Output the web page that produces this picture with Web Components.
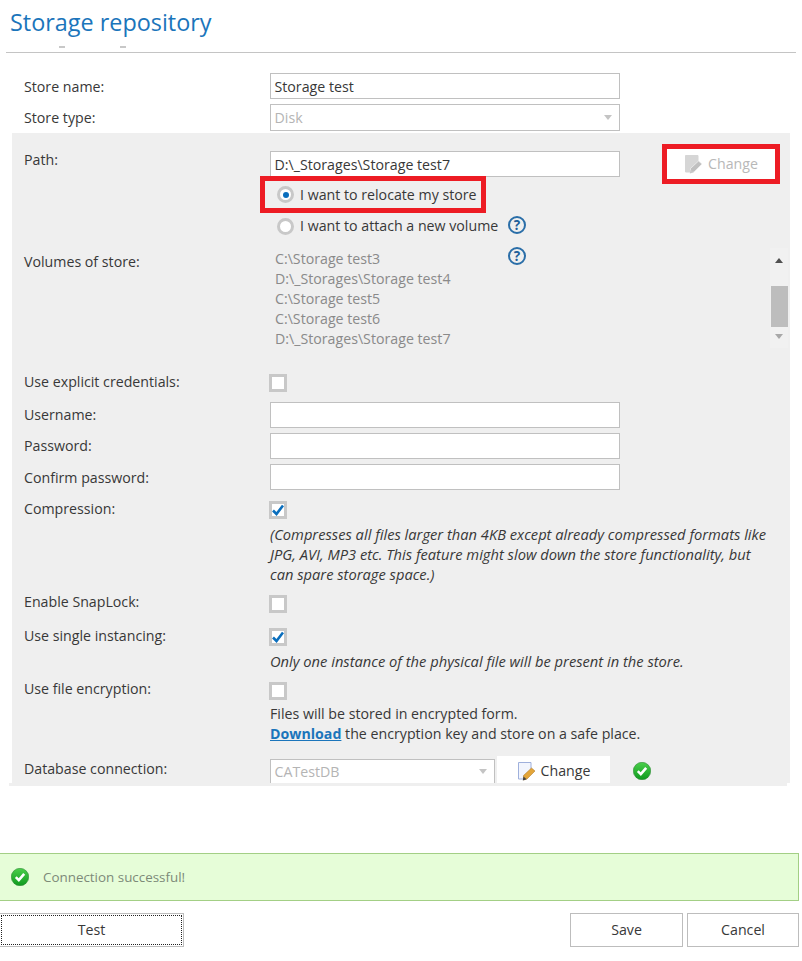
<!DOCTYPE html>
<html>
<head>
<meta charset="utf-8">
<title>Storage repository</title>
<style>
html,body{margin:0;padding:0;background:#fff;}
body{font:14.2px/20px "Open Sans",sans-serif;color:#383838;overflow:hidden;}
a{color:#1b75bb;font-weight:700;}
.note{margin-top:5px;font-style:italic;font-size:14.7px;}
</style>
</head>
<body>
<storage-dialog>
  <sr-row label="Store name:" style="margin-top:20px;--label-top:4px"><sr-field>Storage test</sr-field></sr-row>
  <sr-row label="Store type:" style="margin-top:5px;--label-top:4px"><sr-select disabled style="height:27px">Disk</sr-select></sr-row>

  <sr-panel slot="panel">
    <sr-row label="Path:" style="--label-top:-1px">
      <div style="display:flex;align-items:flex-start">
        <div style="width:350px">
          <sr-field>D:\_Storages\Storage test7</sr-field>
          <sr-radio checked marked>I want to relocate my store</sr-radio>
          <div style="display:flex"><sr-radio>I want to attach a new volume</sr-radio><sr-help style="margin-top:3px"></sr-help></div>
        </div>
        <sr-button icon disabled marked style="margin:-7px 0 0 42px;width:118px;height:40px">Change</sr-button>
      </div>
    </sr-row>
    <sr-row label="Volumes of store:" style="margin-top:10px;--label-top:3px">
      <div style="display:flex;align-items:flex-start">
        <sr-volumes>
          <div>C:\Storage test3</div>
          <div>D:\_Storages\Storage test4</div>
          <div>C:\Storage test5</div>
          <div>C:\Storage test6</div>
          <div>D:\_Storages\Storage test7</div>
        </sr-volumes>
        <sr-help style="margin-top:-2px"></sr-help>
        <sr-scrollbar style="margin:-1px 0 0 auto"></sr-scrollbar>
      </div>
    </sr-row>
    <sr-row label="Use explicit credentials:" style="margin-top:25px;--label-top:-2px"><sr-check></sr-check></sr-row>
    <sr-row label="Username:" style="margin-top:10px;--label-top:3px"><sr-field></sr-field></sr-row>
    <sr-row label="Password:" style="margin-top:5px;--label-top:3px"><sr-field></sr-field></sr-row>
    <sr-row label="Confirm password:" style="margin-top:5px;--label-top:4px"><sr-field></sr-field></sr-row>
    <sr-row label="Compression:" style="margin-top:11px;--label-top:-2px">
      <sr-check checked></sr-check>
      <div class="note" style="width:500px">(Compresses all files larger than 4KB except already compressed formats like JPG, AVI, MP3 etc. This feature might slow down the store functionality, but can spare storage space.)</div>
    </sr-row>
    <sr-row label="Enable SnapLock:" style="margin-top:11px;--label-top:-3px"><sr-check></sr-check></sr-row>
    <sr-row label="Use single instancing:" style="margin-top:15px;--label-top:-2px">
      <sr-check checked></sr-check>
      <div class="note">Only one instance of the physical file will be present in the store.</div>
    </sr-row>
    <sr-row label="Use file encryption:" style="margin-top:11px;--label-top:-3px">
      <sr-check></sr-check>
      <div style="margin-top:4px">Files will be stored in encrypted form.<br><a href="#">Download</a> the encryption key and store on a safe place.</div>
    </sr-row>
    <sr-row label="Database connection:" style="margin-top:12px;--label-top:3px">
      <div style="display:flex;align-items:flex-start">
        <sr-select disabled open-bottom style="width:225px;height:24px;margin-top:3px">CATestDB</sr-select>
        <sr-button icon style="margin-left:2px;width:113px;height:27px;padding-top:2px">Change</sr-button>
        <sr-ok style="margin:6px 0 0 23px"></sr-ok>
      </div>
    </sr-row>
  </sr-panel>

  <sr-message slot="footer">Connection successful!</sr-message>
  <div slot="footer" style="display:flex;margin:12px 3px 0 -1px">
    <sr-push focused style="width:185px">Test</sr-push>
    <sr-push style="width:113px;margin-left:auto">Save</sr-push>
    <sr-push style="width:112px;margin-left:4px">Cancel</sr-push>
  </div>
</storage-dialog>

<script>
// small helper, every component just clones its own template
function tpl(html) {
  const t = document.createElement("template");
  t.innerHTML = html;
  return t;
}

function define(name, html) {
  const t = tpl(html);
  customElements.define(name, class extends HTMLElement {
    constructor() {
      super();
      this.attachShadow({mode: "open"}).append(t.content.cloneNode(true));
    }
  });
}

const DOC_ICON = `
<svg width="20" height="20" viewBox="0 0 20 20">
  <path class="sheet" d="M1.5 1.5h12.5v10l-6 6.500h-6.500z"/>
  <path class="pencil" d="M6.500 14.500 14.500 7l3.500 3-8 8-3.500 1z"/>
  <path class="tip" d="M6.500 15.500 5.800 19.500l3.800-1.200z"/>
</svg>`;

define("storage-dialog", `
<style>
:host{display:block;width:802px;height:961px;overflow:hidden;}
h1{margin:0;padding:5px 0 0 10px;height:35px;font:400 23.4px/34px "Open Sans",sans-serif;color:#1b75bb;}
.clipped{display:flex;height:12px;padding-left:59px;box-sizing:border-box;}
.clipped i{display:block;width:6px;height:2px;margin-top:6px;background:#c8c8c8;}
.clipped i+i{margin-left:55px;}
.rule{margin-left:6px;width:790px;height:1px;background:#c4c4c4;}
</style>
<h1>Storage repository</h1>
<div class="clipped"><i></i><i></i></div>
<div class="rule"></div>
<slot></slot>
<slot name="panel"></slot>
<slot name="footer"></slot>
`);

define("sr-panel", `
<style>
:host{display:block;margin-top:2px;}
.body{margin-left:12px;width:778px;padding:18px 2px 0 12px;box-sizing:border-box;height:650px;overflow:hidden;background:#efefef;}
.strip{margin-left:9px;width:778px;height:3px;background:#efefef;}
</style>
<div class="body"><slot></slot></div>
<div class="strip"></div>
`);

const rowTemplate = tpl(`
<style>
:host{display:grid;grid-template-columns:246px 1fr;padding-left:24px;}
:host([slot]){padding-left:0;}
.label{margin-top:var(--label-top,0);line-height:20px;white-space:nowrap;}
</style>
<div class="label"></div>
<div><slot></slot></div>
`);

customElements.define("sr-row", class extends HTMLElement {
  constructor() {
    super();
    this.attachShadow({mode: "open"}).append(rowTemplate.content.cloneNode(true));
    this.shadowRoot.querySelector(".label").textContent = this.getAttribute("label");
  }
  connectedCallback() {
    // rows inside the grey panel already get their indent from it
    if (this.parentElement.localName === "sr-panel") this.style.paddingLeft = "0";
  }
});

define("sr-field", `
<style>
:host{display:block;box-sizing:border-box;width:350px;height:26px;padding:0 3.500px;border:1px solid #c0c0c0;background:#fff;line-height:25px;white-space:nowrap;overflow:hidden;}
</style>
<slot></slot>
`);

define("sr-select", `
<style>
:host{display:flex;align-items:center;box-sizing:border-box;width:350px;height:26px;padding:0 7px 0 3.500px;border:1px solid #c0c0c0;background:#fff;color:#b4b4b4;}
:host([open-bottom]){border-bottom:0;}
.text{flex:1;}
.arrow{width:0;height:0;border:4px solid transparent;border-top:5px solid #c4c4c4;border-bottom:0;}
</style>
<span class="text"><slot></slot></span>
<span class="arrow"></span>
`);

define("sr-radio", `
<style>
:host{display:flex;align-items:center;box-sizing:border-box;width:238px;height:26px;padding-left:7px;white-space:nowrap;}
:host([marked]){margin:-1px 0 0 -10px;width:226px;height:37px;padding-left:12px;border:5px solid #ed1c24;}
.dot{flex:none;box-sizing:border-box;width:17px;height:17px;margin-right:6px;border:3px solid #c8c8c8;border-radius:50%;background:#fff;display:grid;place-items:center;}
:host([checked]) .dot::after{content:"";width:6px;height:6px;border-radius:50%;background:#0a6ebd;}
</style>
<span class="dot"></span><slot></slot>
`);

define("sr-check", `
<style>
:host{display:block;box-sizing:border-box;width:18px;height:18px;margin-left:-1px;border:3px solid #c8c8c8;background:#fff;}
svg{display:none;}
:host([checked]) svg{display:block;}
</style>
<svg width="12" height="12" viewBox="0 0 12 12"><path d="M1 6.500 4.500 10 11 1.500" fill="none" stroke="#0a6ebd" stroke-width="2.600"/></svg>
`);

define("sr-help", `
<style>
:host{display:grid;place-items:center;flex:none;box-sizing:border-box;width:18px;height:18px;border:2px solid #2a6ea8;border-radius:50%;color:#1f5f9a;font:700 13.500px/14px "Open Sans",sans-serif;}
</style>
?
`);

define("sr-volumes", `
<style>
:host{display:block;box-sizing:border-box;width:238px;padding-left:5px;line-height:20px;color:#8a8a8a;white-space:nowrap;}
</style>
<slot></slot>
`);

define("sr-scrollbar", `
<style>
:host{display:flex;flex-direction:column;align-items:center;box-sizing:border-box;width:18px;height:100px;background:#f1f1f1;}
.up,.down{width:0;height:0;border:4px solid transparent;}
.up{margin-top:10px;border-top:0;border-bottom:5px solid #505050;}
.thumb{width:17px;height:41px;margin-top:23px;background:#bdbdbd;}
.down{margin-top:7px;border-bottom:0;border-top:5px solid #a8a8a8;}
</style>
<span class="up"></span><span class="thumb"></span><span class="down"></span>
`);

define("sr-button", `
<style>
:host{display:flex;align-items:center;justify-content:center;flex:none;box-sizing:border-box;background:#fff;white-space:nowrap;}
:host([marked]){border:5px solid #ed1c24;}
:host([disabled]){color:#b8b8b8;}
svg{margin-right:4px;flex:none;}
.sheet{fill:#f2f5fd;stroke:#9fb0dc;}
.pencil{fill:#e3a53a;stroke:#a8701c;stroke-width:.500;}
.tip{fill:#444;}
:host([disabled]) .sheet{fill:#d6d6d6;stroke:#d6d6d6;}
:host([disabled]) .pencil{fill:#c0c0c0;stroke:#efefef;stroke-width:.800;}
:host([disabled]) .tip{fill:#c8c8c8;}
</style>
${DOC_ICON}<slot></slot>
`);

define("sr-ok", `
<style>
:host{display:block;flex:none;width:18px;height:18px;}
svg{display:block;}
</style>
<svg width="18" height="18" viewBox="0 0 18 18">
  <defs><linearGradient id="g" x1="0" y1="0" x2="0" y2="1"><stop offset="0" stop-color="#4bcf4b"/><stop offset="1" stop-color="#0f9a1e"/></linearGradient></defs>
  <circle cx="9" cy="9" r="8.700" fill="url(#g)" stroke="#2f8a35" stroke-width=".600"/>
  <path d="M4.800 9.200 7.800 12.200 13.200 5.800" fill="none" stroke="#fff" stroke-width="2.600"/>
</svg>
`);

define("sr-message", `
<style>
:host{display:flex;align-items:center;box-sizing:border-box;width:799px;height:48px;margin-top:67px;padding-left:11px;border:1px solid #a3cf85;border-left:0;background:#e6fdd8;color:#7d8a78;font-size:13.400px;}
sr-ok{margin-right:14px;}
</style>
<sr-ok></sr-ok><slot></slot>
`);

define("sr-push", `
<style>
:host{display:flex;align-items:center;justify-content:center;box-sizing:border-box;height:34px;border:1px solid #bdbdbd;background:#fff;}
:host([focused]){outline:1px dotted #222;outline-offset:-3px;}
</style>
<slot></slot>
`);
</script>
</body>
</html>
